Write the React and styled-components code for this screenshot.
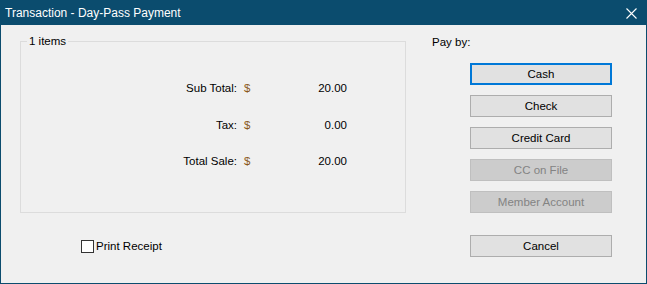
import React from 'react'
import styled, { createGlobalStyle } from 'styled-components'

const Global = createGlobalStyle`
  html, body {
    margin: 0;
    padding: 0;
    background: #f0f0f0;
  }
  body {
    font-family: 'Liberation Sans', Arial, sans-serif;
    font-size: 11.5px;
    color: #000;
  }
`

const Window = styled.div`
  width: 647px;
  height: 284px;
  box-sizing: border-box;
  display: flex;
  flex-direction: column;
  background: #f0f0f0;
  border: 1px solid #0b4c6e;
  border-top: none;
`

const TitleBar = styled.div`
  height: 25px;
  margin: 0 -1px;
  flex-shrink: 0;
  display: flex;
  align-items: center;
  justify-content: space-between;
  padding: 0 10px 0 5px;
  background: #0b4c6e;
  color: #fff;
  font-size: 12px;
`

const Close = styled.svg`
  width: 11px;
  height: 11px;
  margin-top: 1px;
`

const Body = styled.div`
  flex: 1;
  display: flex;
`

const LeftPane = styled.div`
  width: 405px;
  padding: 16px 0 0 19px;
  box-sizing: border-box;
`

const Group = styled.div`
  position: relative;
  width: 386px;
  height: 172px;
  box-sizing: border-box;
  border: 1px solid #dcdcdc;
  padding-top: 39px;
  display: flex;
  flex-direction: column;
  gap: 22.5px;
`

const Legend = styled.span`
  position: absolute;
  top: -8px;
  left: 6px;
  padding: 0 2px;
  background: #f0f0f0;
  line-height: 14px;
`

const Row = styled.div`
  display: flex;
  line-height: 14px;
`

const Label = styled.span`
  width: 216px;
  text-align: right;
`

const Dollar = styled.span`
  width: 7px;
  margin-left: 7px;
  color: #8a5818;
`

const Value = styled.span`
  width: 96px;
  text-align: right;
`

const CheckRow = styled.label`
  display: flex;
  align-items: center;
  margin: 26px 0 0 61px;
  line-height: 14px;
`

const Box = styled.span`
  width: 13px;
  height: 13px;
  box-sizing: border-box;
  border: 1px solid #333;
  background: #fff;
  margin-right: 2px;
`

const RightPane = styled.div`
  flex: 1;
  padding: 10px 0 0 26px;
  display: flex;
  flex-direction: column;
`

const PayBy = styled.div`
  line-height: 14px;
`

const Buttons = styled.div`
  margin: 14px 0 0 38px;
  display: flex;
  flex-direction: column;
  gap: 10px;
`

const Button = styled.button`
  width: 142px;
  height: 22px;
  box-sizing: border-box;
  font: inherit;
  padding: 0;
  margin-top: ${p => (p.$spaced ? '12px' : '0')};
  background: ${p => (p.disabled ? '#cccccc' : '#e1e1e1')};
  color: ${p => (p.disabled ? '#838383' : '#000')};
  border: ${p =>
    p.$focus ? '2px solid #0078d7' : p.disabled ? '1px solid #bfbfbf' : '1px solid #adadad'};
`

const rows = [
  { label: 'Sub Total:', value: '20.00' },
  { label: 'Tax:', value: '0.00' },
  { label: 'Total Sale:', value: '20.00' }
]

export default function App() {
  return (
    <>
      <Global />
      <Window>
        <TitleBar>
          <span>Transaction - Day-Pass Payment</span>
          <Close viewBox='0 0 11 11'>
            <path d='M0.5 0.5 L10.5 10.5 M10.5 0.5 L0.5 10.5' stroke='#fff' strokeWidth='1.1' />
          </Close>
        </TitleBar>
        <Body>
          <LeftPane>
            <Group>
              <Legend>1 items</Legend>
              {rows.map(r => (
                <Row key={r.label}>
                  <Label>{r.label}</Label>
                  <Dollar>$</Dollar>
                  <Value>{r.value}</Value>
                </Row>
              ))}
            </Group>
            <CheckRow>
              <Box />
              Print Receipt
            </CheckRow>
          </LeftPane>
          <RightPane>
            <PayBy>Pay by:</PayBy>
            <Buttons>
              <Button $focus>Cash</Button>
              <Button>Check</Button>
              <Button>Credit Card</Button>
              <Button disabled>CC on File</Button>
              <Button disabled>Member Account</Button>
              <Button $spaced>Cancel</Button>
            </Buttons>
          </RightPane>
        </Body>
      </Window>
    </>
  )
}
